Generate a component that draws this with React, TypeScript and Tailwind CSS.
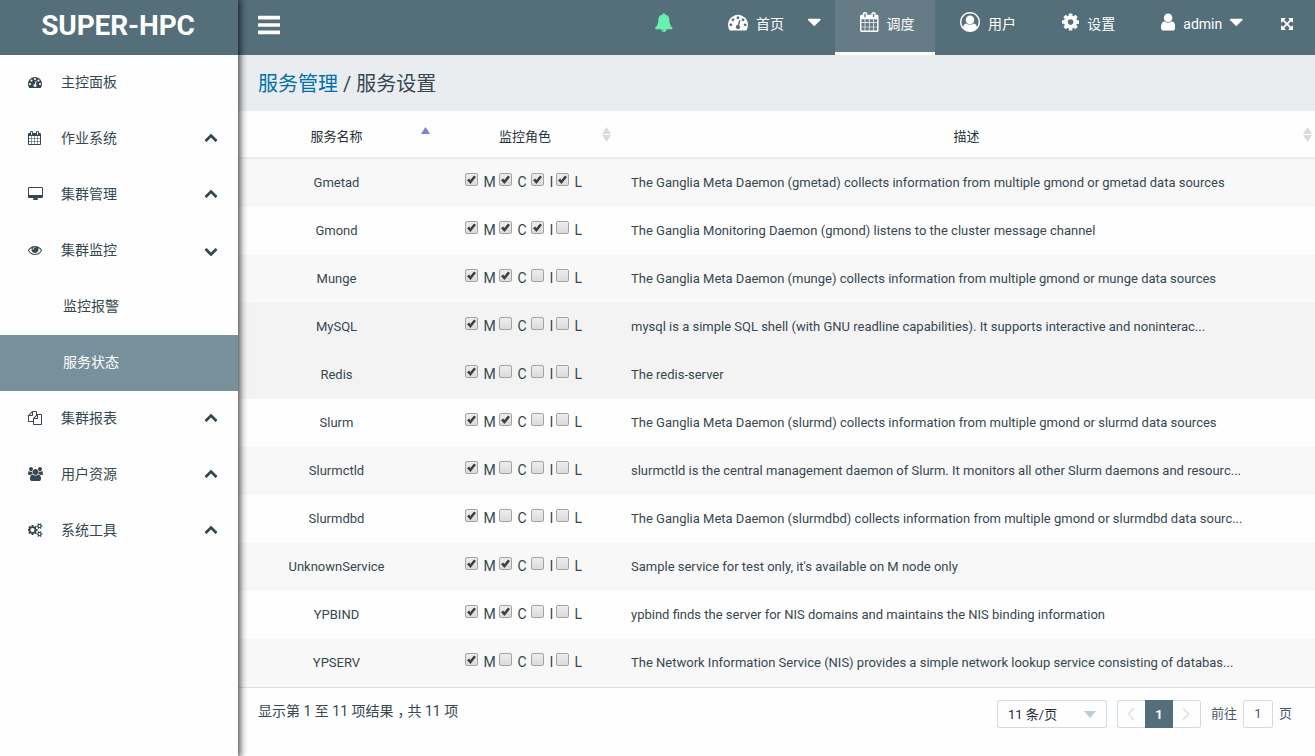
import type { ReactNode } from "react";

const paths = {
  bars: "M1664 1344v128q0 26-19 45t-45 19h-1408q-26 0-45-19t-19-45v-128q0-26 19-45t45-19h1408q26 0 45 19t19 45zm0-512v128q0 26-19 45t-45 19h-1408q-26 0-45-19t-19-45v-128q0-26 19-45t45-19h1408q26 0 45 19t19 45zm0-512v128q0 26-19 45t-45 19h-1408q-26 0-45-19t-19-45v-128q0-26 19-45t45-19h1408q26 0 45 19t19 45z",
  up: "M1683 1331l-166 165q-19 19-45 19t-45-19l-531-531-531 531q-19 19-45 19t-45-19l-166-165q-19-19-19-45.5t19-45.5l742-741q19-19 45-19t45 19l742 741q19 19 19 45.5t-19 45.5z",
  down: "M1683 808l-742 741q-19 19-45 19t-45-19l-742-741q-19-19-19-45.5t19-45.5l166-165q19-19 45-19t45 19l531 531 531-531q19-19 45-19t45 19l166 165q19 19 19 45.5t-19 45.5z",
  desktop: "M1728 992v-832q0-13-9.5-22.5t-22.5-9.5h-1600q-13 0-22.5 9.5t-9.5 22.5v832q0 13 9.5 22.5t22.5 9.5h1600q13 0 22.5-9.5t9.5-22.5zm128-832v1088q0 66-47 113t-113 47h-544q0 37 16 77.5t32 71 16 43.5q0 26-19 45t-45 19h-512q-26 0-45-19t-19-45q0-14 16-44t32-70 16-78h-544q-66 0-113-47t-47-113v-1088q0-66 47-113t113-47h1600q66 0 113 47t47 113z",
  calendar: "M192 1664h288v-288h-288v288zm352 0h320v-288h-320v288zm-352-352h288v-320h-288v320zm352 0h320v-320h-320v320zm-352-384h288v-288h-288v288zm736 736h320v-288h-320v288zm-384-736h320v-288h-320v288zm768 736h288v-288h-288v288zm-384-352h320v-320h-320v320zm-352-864v-288q0-13-9.5-22.5t-22.5-9.5h-64q-13 0-22.5 9.5t-9.5 22.5v288q0 13 9.5 22.5t22.5 9.5h64q13 0 22.5-9.5t9.5-22.5zm736 864h288v-320h-288v320zm-384-384h320v-288h-320v288zm384 0h288v-288h-288v288zm32-480v-288q0-13-9.5-22.5t-22.5-9.5h-64q-13 0-22.5 9.5t-9.5 22.5v288q0 13 9.5 22.5t22.5 9.5h64q13 0 22.5-9.5t9.5-22.5zm384-64v1280q0 52-38 90t-90 38h-1408q-52 0-90-38t-38-90v-1280q0-52 38-90t90-38h128v-96q0-66 47-113t113-47h64q66 0 113 47t47 113v96h384v-96q0-66 47-113t113-47h64q66 0 113 47t47 113v96h128q52 0 90 38t38 90z",
  gauge: "M384 1152q0-53-37.5-90.5t-90.5-37.5-90.5 37.5-37.5 90.5 37.5 90.5 90.5 37.5 90.5-37.5 37.5-90.5zm192-448q0-53-37.5-90.5t-90.5-37.5-90.5 37.5-37.5 90.5 37.5 90.5 90.5 37.5 90.5-37.5 37.5-90.5zm428 481l101-382q6-26-7.5-48.5t-38.5-29.5-48 6.5-30 39.5l-101 382q-60 5-107 43.5t-63 98.5q-20 77 20 146t117 89 146-20 89-117q16-60-6-117t-72-91zm660-33q0-53-37.5-90.5t-90.5-37.5-90.5 37.5-37.5 90.5 37.5 90.5 90.5 37.5 90.5-37.5 37.5-90.5zm-640-640q0-53-37.5-90.5t-90.5-37.5-90.5 37.5-37.5 90.5 37.5 90.5 90.5 37.5 90.5-37.5 37.5-90.5zm448 192q0-53-37.5-90.5t-90.5-37.5-90.5 37.5-37.5 90.5 37.5 90.5 90.5 37.5 90.5-37.5 37.5-90.5zm320 448q0 261-141 483-19 29-54 29h-1402q-35 0-54-29-141-221-141-483 0-182 71-348t191-286 286-191 348-71 348 71 286 191 191 286 71 348z",
  eye: "M1664 960q-152-236-381-353 61 104 61 225 0 185-131.5 316.5t-316.5 131.5-316.5-131.5-131.5-316.5q0-121 61-225-229 117-381 353 133 205 333.5 326.5t434.5 121.5 434.5-121.5 333.5-326.5zm-720-384q0-20-14-34t-34-14q-125 0-214.5 89.5t-89.5 214.5q0 20 14 34t34 14 34-14 14-34q0-86 61-147t147-61q20 0 34-14t14-34zm848 384q0 34-20 69-140 230-376.5 368.5t-499.5 138.5-499.5-139-376.5-368q-20-35-20-69t20-69q140-229 376.5-368t499.5-139 499.5 139 376.5 368q20 35 20 69z",
  cog: "M1152 896q0-106-75-181t-181-75-181 75-75 181 75 181 181 75 181-75 75-181zm512-109v222q0 12-8 23t-20 13l-185 28q-19 54-39 91 35 50 107 138 10 12 10 25t-9 23q-27 37-99 108t-94 71q-12 0-26-9l-138-108q-44 23-91 38-16 136-29 186-7 28-36 28h-222q-14 0-24.5-8.5t-11.5-21.5l-28-184q-49-16-90-37l-141 107q-10 9-25 9-14 0-25-11-126-114-165-168-7-10-7-23 0-12 8-23 15-21 51-66.5t54-70.5q-27-50-41-99l-183-27q-13-2-21-12.5t-8-23.5v-222q0-12 8-23t19-13l186-28q14-46 39-92-40-57-107-138-10-12-10-24 0-10 9-23 26-36 98.5-107.5t94.5-71.5q13 0 26 10l138 107q44-23 91-38 16-136 29-186 7-28 36-28h222q14 0 24.5 8.5t11.5 21.5l28 184q49 16 90 37l142-107q9-9 24-9 13 0 25 10 129 119 165 170 7 8 7 22 0 12-8 23-15 21-51 66.5t-54 70.5q26 50 41 98l183 28q13 2 21 12.5t8 23.5z",
  files: "M1696 384q40 0 68 28t28 68v1216q0 40-28 68t-68 28h-960q-40 0-68-28t-28-68v-288h-544q-40 0-68-28t-28-68v-672q0-40 20-88t48-76l408-408q28-28 76-48t88-20h416q40 0 68 28t28 68v328q68-40 128-40h416zm-544 213l-299 299h299v-299zm-640-384l-299 299h299v-299zm196 647l316-316v-416h-384v416q0 40-28 68t-68 28h-416v640h512v-256q0-40 20-88t48-76zm956 804v-1152h-384v416q0 40-28 68t-68 28h-416v640h896z",
  userCircle: "M896 0q182 0 348 71t286 191 191 286 71 348q0 181-70.5 347t-190.5 286-286 191.5-349 71.5-349-71-285.5-191.5-190.5-286-71-347.5 71-348 191-286 286-191 348-71zm619 1351q149-205 149-455 0-156-61-298t-164-245-245-164-298-61-298 61-245 164-164 245-61 298q0 250 149 455 66-327 306-327 131 128 313 128t313-128q240 0 306 327zm-235-647q0-159-112.5-271.5t-271.5-112.5-271.5 112.5-112.5 271.5 112.5 271.5 271.5 112.5 271.5-112.5 112.5-271.5z",
  user: "M1536 1399q0 109-62.5 187t-150.5 78h-854q-88 0-150.5-78t-62.5-187q0-85 8.5-160.5t31.5-152 58.5-131 94-89 134.5-34.5q131 128 313 128t313-128q76 0 134.5 34.5t94 89 58.5 131 31.5 152 8.5 160.5zm-256-887q0 159-112.5 271.5t-271.5 112.5-271.5-112.5-112.5-271.5 112.5-271.5 271.5-112.5 271.5 112.5 112.5 271.5z",
  arrows: "M1411 541l-355 355 355 355 144-144q29-31 70-14 39 17 39 59v448q0 26-19 45t-45 19h-448q-42 0-59-40-17-39 14-69l144-144-355-355-355 355 144 144q31 30 14 69-17 40-59 40h-448q-26 0-45-19t-19-45v-448q0-42 40-59 39-17 69 14l144 144 355-355-355-355-144 144q-19 19-45 19-12 0-24-5-40-17-40-59v-448q0-26 19-45t45-19h448q42 0 59 40 17 39-14 69l-144 144 355 355 355-355-144-144q-31-30-14-69 17-40 59-40h448q26 0 45 19t19 45v448q0 42-39 59-13 5-25 5-26 0-45-19z",
  caret: "M1408 704q0 26-19 45l-448 448q-19 19-45 19t-45-19l-448-448q-19-19-19-45t19-45 45-19h896q26 0 45 19t19 45z",
  bell: "M912 1696q0-16-16-16-59 0-101.5-42.5t-42.5-101.5q0-16-16-16t-16 16q0 73 51.5 124.5t124.5 51.5q16 0 16-16zm816-288q0 52-38 90t-90 38h-448q0 106-75 181t-181 75-181-75-75-181h-448q-52 0-90-38t-38-90q50-42 91-88t85-119.5 74.5-158.5 50-206 19.5-260q0-152 117-282.5t307-158.5q-8-19-8-39 0-40 28-68t68-28 68 28 28 68q0 20-8 39 190 28 307 158.5t117 282.5q0 139 19.5 260t50 206 74.5 158.5 85 119.5 91 88z",
  users: "M657 896q-162 5-265 128h-134q-82 0-138-40.5t-56-118.5q0-353 124-353 6 0 43.5 21t97.5 42.5 119 21.5q67 0 133-23-5 37-5 66 0 139 81 256zm1071 637q0 120-73 189.5t-194 69.5h-874q-121 0-194-69.5t-73-189.5q0-53 3.5-103.5t14-109 26.5-108.5 43-97.5 62-81 85.5-53.5 111.5-20q10 0 43 21.5t73 48 107 48 135 21.5 135-21.5 107-48 73-48 43-21.5q61 0 111.5 20t85.5 53.5 62 81 43 97.5 26.5 108.5 14 109 3.5 103.5zm-1024-1277q0 106-75 181t-181 75-181-75-75-181 75-181 181-75 181 75 75 181zm704 384q0 159-112.5 271.5t-271.5 112.5-271.5-112.5-112.5-271.5 112.5-271.5 271.5-112.5 271.5 112.5 112.5 271.5zm576 225q0 78-56 118.5t-138 40.5h-134q-103-123-265-128 81-117 81-256 0-29-5-66 66 23 133 23 59 0 119-21.5t97.5-42.5 43.5-21q124 0 124 353zm-128-609q0 106-75 181t-181 75-181-75-75-181 75-181 181-75 181 75 75 181z",
  cogs: "M832 896q0-106-75-181t-181-75-181 75-75 181 75 181 181 75 181-75 75-181zm768 512q0-52-38-90t-90-38-90 38-38 90q0 53 37.5 90.5t90.5 37.5 90.5-37.5 37.5-90.5zm0-1024q0-52-38-90t-90-38-90 38-38 90q0 53 37.5 90.5t90.5 37.5 90.5-37.5 37.5-90.5zm-384 421v185q0 10-7 19.5t-16 10.5l-155 24q-11 35-32 76 34 48 90 115 7 11 7 20 0 12-7 19-23 30-82.5 89.5t-78.5 59.5q-11 0-21-7l-115-90q-37 19-77 31-11 108-23 155-7 24-30 24h-186q-11 0-20-7.5t-10-17.5l-23-153q-34-10-75-31l-118 89q-7 7-20 7-11 0-21-8-144-133-144-160 0-9 7-19 10-14 41-53t47-61q-23-44-35-82l-152-24q-10-1-17-9.5t-7-19.5v-185q0-10 7-19.5t16-10.5l155-24q11-35 32-76-34-48-90-115-7-11-7-20 0-12 7-20 22-30 82-89t79-59q11 0 21 7l115 90q34-18 77-32 11-108 23-154 7-24 30-24h186q11 0 20 7.5t10 17.5l23 153q34 10 75 31l118-89q8-7 20-7 11 0 21 8 144 133 144 160 0 8-7 19-12 16-42 54t-45 60q23 48 34 82l152 23q10 2 17 10.5t7 19.5zm640 533v140q0 16-149 31-12 27-30 52 51 113 51 138 0 4-4 7-122 71-124 71-8 0-46-47t-52-68q-20 2-30 2t-30-2q-14 21-52 68t-46 47q-2 0-124-71-4-3-4-7 0-25 51-138-18-25-30-52-149-15-149-31v-140q0-16 149-31 13-29 30-52-51-113-51-138 0-4 4-7 4-2 35-20t59-34 30-16q8 0 46 46.5t52 67.5q20-2 30-2t30 2q51-71 92-112l6-2q4 0 124 70 4 3 4 7 0 25-51 138 17 23 30 52 149 15 149 31zm0-1024v140q0 16-149 31-12 27-30 52 51 113 51 138 0 4-4 7-122 71-124 71-8 0-46-47t-52-68q-20 2-30 2t-30-2q-14 21-52 68t-46 47q-2 0-124-71-4-3-4-7 0-25 51-138-18-25-30-52-149-15-149-31v-140q0-16 149-31 13-29 30-52-51-113-51-138 0-4 4-7 4-2 35-20t59-34 30-16q8 0 46 46.5t52 67.5q20-2 30-2t30 2q51-71 92-112l6-2q4 0 124 70 4 3 4 7 0 25-51 138 17 23 30 52 149 15 149 31z",
};

type IconName = keyof typeof paths;

// Left edge and advance width of each glyph on the 1792-unit em square.
const glyphBox: Record<IconName, [number, number]> = {
  bars: [128, 1536],
  up: [0, 1792],
  down: [0, 1792],
  desktop: [-64, 1920],
  calendar: [64, 1664],
  gauge: [0, 1792],
  eye: [0, 1792],
  cog: [128, 1536],
  files: [0, 1792],
  userCircle: [0, 1792],
  user: [256, 1280],
  arrows: [128, 1536],
  caret: [384, 1024],
  bell: [64, 1664],
  users: [64, 1920],
  cogs: [0, 1920],
};

function Icon({ name, size, className = "" }: { name: IconName; size: number; className?: string }) {
  const [x, w] = glyphBox[name];
  return (
    <svg
      className={`shrink-0 ${className}`}
      width={(w / 1792) * size}
      height={size}
      viewBox={`${x} 0 ${w} 1792`}
      fill="currentColor"
      aria-hidden="true"
    >
      <path d={paths[name]} />
    </svg>
  );
}

type MenuItem = { label: string; icon?: IconName; open?: boolean; leaf?: boolean; active?: boolean };

const menu: MenuItem[] = [
  { label: "主控面板", icon: "gauge", leaf: true },
  { label: "作业系统", icon: "calendar" },
  { label: "集群管理", icon: "desktop" },
  { label: "集群监控", icon: "eye", open: true },
  { label: "监控报警", leaf: true },
  { label: "服务状态", leaf: true, active: true },
  { label: "集群报表", icon: "files" },
  { label: "用户资源", icon: "users" },
  { label: "系统工具", icon: "cogs" },
];

function Sidebar() {
  return (
    <aside className="z-10 flex w-[238px] shrink-0 flex-col bg-[#fefefe] shadow-[0_0_7px_2px_rgba(0,0,0,0.75)]">
      <div className="flex h-[55px] items-center justify-center bg-[#546e7a] pb-1 pr-[2px] text-[28px] font-bold tracking-[-0.1px] text-white">
        SUPER-HPC
      </div>
      <nav className="flex flex-col text-sm">
        {menu.map((m) => (
          <a
            key={m.label}
            className={`flex h-14 items-center pb-0.5 pr-[20px] ${m.icon ? "pl-7" : "pl-[63px]"} ${
              m.active ? "bg-[#78909c] text-white" : "text-[#37474f]"
            }`}
          >
            {m.icon && (
              <span className="flex w-[33px]">
                <Icon name={m.icon} size={14} />
              </span>
            )}
            <span className="flex-1">{m.label}</span>
            {!m.leaf && <Icon name={m.open ? "down" : "up"} size={14} className={m.open ? "mt-px" : "mb-0.5"} />}
          </a>
        ))}
      </nav>
    </aside>
  );
}

function NavItem({ icon, label, className, caret }: { icon: IconName; label: string; className: string; caret?: string }) {
  return (
    <a className={`flex h-[55px] shrink-0 pt-3 ${className}`}>
      <Icon name={icon} size={20} />
      <span className="ml-2 mt-0.5 leading-5">{label}</span>
      {caret && <Icon name="caret" size={22} className={caret} />}
    </a>
  );
}

function TopBar() {
  return (
    <header className="flex h-[55px] shrink-0 bg-[#546e7a] text-sm text-white">
      <Icon name="bars" size={26} className="ml-[20px] mt-3" />
      <Icon name="bell" size={19} className="ml-auto mt-[13px] text-[#69f0ae]" />
      <NavItem icon="gauge" label="首页" className="ml-[55px] w-[107px]" caret="ml-6 -mt-px" />
      <NavItem icon="calendar" label="调度" className="w-[100px] border-b-[3px] border-white bg-[#657c87] pl-[25px]" />
      <NavItem icon="userCircle" label="用户" className="w-[126px] pl-[25px]" />
      <NavItem icon="cog" label="设置" className="w-[99px] pl-px" />
      <NavItem icon="user" label="admin" className="w-[121px] pl-px" caret="ml-2 -mt-px" />
      <Icon name="arrows" size={14} className="mr-[22px] mt-[17px]" />
    </header>
  );
}

function Check({ on }: { on: boolean }) {
  return (
    <span className="flex size-[13px] shrink-0 rounded-[2px] border border-[#a3a3a3] bg-linear-to-b from-[#ededed] to-[#dcdcdc]">
      {on && (
        <svg viewBox="0 0 11 11" width="11" height="11" aria-hidden="true">
          <path d="M2.1 5.3 L4.4 8 L9 2.3" fill="none" stroke="#3f3f3f" strokeWidth="2.6" />
        </svg>
      )}
    </span>
  );
}

// Each role string lists the node types on which the service is watched.
const services: [string, string, string][] = [
  ["Gmetad", "MCIL", "The Ganglia Meta Daemon (gmetad) collects information from multiple gmond or gmetad data sources"],
  ["Gmond", "MCI", "The Ganglia Monitoring Daemon (gmond) listens to the cluster message channel"],
  ["Munge", "MC", "The Ganglia Meta Daemon (munge) collects information from multiple gmond or munge data sources"],
  ["MySQL", "M", "mysql is a simple SQL shell (with GNU readline capabilities). It supports interactive and noninterac..."],
  ["Redis", "M", "The redis-server"],
  ["Slurm", "MC", "The Ganglia Meta Daemon (slurmd) collects information from multiple gmond or slurmd data sources"],
  ["Slurmctld", "M", "slurmctld is the central management daemon of Slurm. It monitors all other Slurm daemons and resourc..."],
  ["Slurmdbd", "M", "The Ganglia Meta Daemon (slurmdbd) collects information from multiple gmond or slurmdbd data sourc..."],
  ["UnknownService", "MC", "Sample service for test only, it's available on M node only"],
  ["YPBIND", "MC", "ypbind finds the server for NIS domains and maintains the NIS binding information"],
  ["YPSERV", "M", "The Network Information Service (NIS) provides a simple network lookup service consisting of databas..."],
];

const roles: [string, string][] = [
  ["M", "w-[34px]"],
  ["C", "w-8"],
  ["I", "w-[25px]"],
  ["L", "w-[27px]"],
];

function SortMark({ sorted }: { sorted?: boolean }) {
  return (
    <svg width="9" height="15" viewBox="0 0 9 15" className="mt-px shrink-0" aria-hidden="true">
      <path d="M0 7 L4.5 0 L9 7Z" fill={sorted ? "#7b7fd9" : "#dadada"} />
      {!sorted && <path d="M0 8 L4.5 15 L9 8Z" fill="#dadada" />}
    </svg>
  );
}

function HeadCell({ children, className, sorted }: { children: ReactNode; className: string; sorted?: boolean }) {
  return (
    <div className={`flex items-center ${className}`}>
      <span className="flex-1 pt-1.5 text-center">{children}</span>
      <SortMark sorted={sorted} />
    </div>
  );
}

function Table() {
  return (
    <section className="flex flex-col border-b border-[#dcdfe3] text-[13px] text-[#37474f]">
      <div className="flex h-12 border-b-2 border-[#e9edf0] text-[#263238]">
        <HeadCell className="w-[192px] pl-[14px]" sorted>
          服务名称
        </HeadCell>
        <HeadCell className="w-[181px] pl-[18px]">监控角色</HeadCell>
        <HeadCell className="mr-[3px] flex-1 pl-[19px]">描述</HeadCell>
      </div>
      {services.map(([name, on, text], i) => (
        <div
          key={name}
          className={`flex h-12 items-center ${
            i === 3 || i === 4 ? "bg-[#f3f3f3]" : i % 2 ? "bg-[#fefefe]" : "bg-[#f8f8f8]"
          }`}
        >
          <div className="w-[197px] text-center">{name}</div>
          <div className="flex w-[196px] pb-0.5 pl-[30px] text-sm">
            {roles.map(([r, w]) => (
              <label key={r} className={`flex items-start ${w}`}>
                <span className="-mt-px">
                  <Check on={on.includes(r)} />
                </span>
                <span className="ml-[5.5px] leading-4">{r}</span>
              </label>
            ))}
          </div>
          <div>{text}</div>
        </div>
      ))}
    </section>
  );
}

function Arrow({ d }: { d: string }) {
  return (
    <button className="flex w-[27px] items-center justify-center">
      <svg width="8" height="14" viewBox="0 0 8 14" fill="none" stroke="#dcdfe3" strokeWidth="1.5" aria-hidden="true">
        <path d={d} />
      </svg>
    </button>
  );
}

function Footer() {
  return (
    <footer className="flex pl-5 pr-[23px] pt-3 text-[13px] text-[#48576a]">
      <div className="mt-px flex-1 text-sm text-[#37474f]">
        显示第 1 至 11 项结果<span className="-mr-1 pl-1">，</span>共 11 项
      </div>
      <div className="flex h-7 w-[110px] items-center justify-between rounded-[2px] border border-[#cfdce5] pl-2.5 pr-2.5 text-[#1f2d3d]">
        <span className="pt-px">11 条/页</span>
        <svg width="12" height="7" viewBox="0 0 12 7" fill="#bfcbd9" aria-hidden="true">
          <path d="M0 0H12L6 7Z" />
        </svg>
      </div>
      <div className="ml-2.5 flex h-7 w-[84px] rounded-[2px] border border-[#cfdce5]">
        <Arrow d="M7 1 L1.5 7 L7 13" />
        <span className="-my-px flex w-7 items-center justify-center bg-[#546e7a] pt-px font-bold text-white">1</span>
        <Arrow d="M1 1 L6.5 7 L1 13" />
      </div>
      <span className="ml-2.5 leading-[27px]">前往</span>
      <span className="ml-[6px] flex h-7 w-[30px] items-center justify-center rounded-[2px] border border-[#cfdce5]">1</span>
      <span className="ml-1.5 leading-[27px]">页</span>
    </footer>
  );
}

export default function App() {
  return (
    <div className="flex h-[756px] w-[1315px] overflow-hidden bg-[#fefefe] font-[Roboto,'Noto_Sans_CJK_SC',sans-serif]">
      <Sidebar />
      <main className="flex min-w-0 flex-1 flex-col">
        <TopBar />
        <div className="flex h-14 shrink-0 items-center bg-[#e9edf0] pl-5 pt-0.5 text-xl whitespace-pre text-[#37474f]">
          <a className="text-[#0070a8]">服务管理</a>
          <span> / 服务设置</span>
        </div>
        <Table />
        <Footer />
      </main>
    </div>
  );
}
